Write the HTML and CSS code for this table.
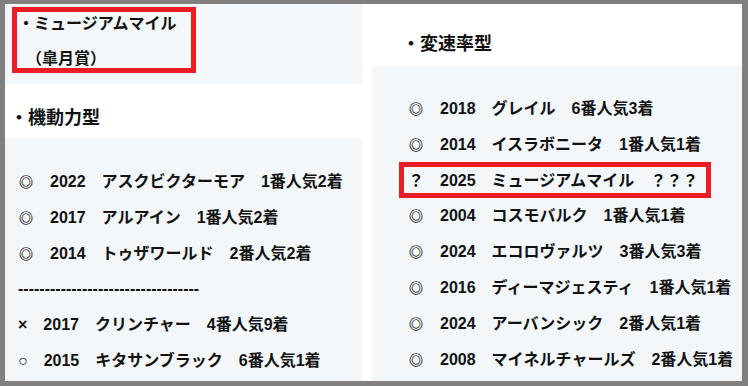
FILE: index.html
```html
<!DOCTYPE html>
<html lang="ja">
<head>
<meta charset="utf-8">
<title>ミュージアムマイル</title>
<link rel="stylesheet" href="styles.css">
</head>
<body>
<div class="frame">
  <div class="col col-left">
    <div class="panel intro">
      <p class="line">・ミュージアムマイル</p>
      <p class="line">　（皐月賞）</p>
      <span class="mark mark-intro"></span>
    </div>
    <h2 class="sec sec-left">・機動力型</h2>
    <div class="panel list list-left">
      <p class="row"><span class="sym">◎</span>　2022　アスクビクターモア　1番人気2着</p>
      <p class="row"><span class="sym">◎</span>　2017　アルアイン　1番人気2着</p>
      <p class="row"><span class="sym">◎</span>　2014　トゥザワールド　2番人気2着</p>
      <p class="row">----------------------------------</p>
      <p class="row">×　2017　クリンチャー　4番人気9着</p>
      <p class="row">○　2015　キタサンブラック　6番人気1着</p>
    </div>
  </div>
  <div class="col col-right">
    <h2 class="sec sec-right">・変速率型</h2>
    <div class="panel list list-right">
      <p class="row"><span class="sym">◎</span>　2018　グレイル　6番人気3着</p>
      <p class="row"><span class="sym">◎</span>　2014　イスラボニータ　1番人気1着</p>
      <p class="row row-marked">？　2025　ミュージアムマイル　？？？<span class="mark mark-row"></span></p>
      <p class="row"><span class="sym">◎</span>　2004　コスモバルク　1番人気1着</p>
      <p class="row"><span class="sym">◎</span>　2024　エコロヴァルツ　3番人気3着</p>
      <p class="row"><span class="sym">◎</span>　2016　ディーマジェスティ　1番人気1着</p>
      <p class="row"><span class="sym">◎</span>　2024　アーバンシック　2番人気1着</p>
      <p class="row"><span class="sym">◎</span>　2008　マイネルチャールズ　2番人気1着</p>
    </div>
  </div>
</div>
</body>
</html>
```

FILE: styles.css
```css
html, body {
  margin: 0;
  padding: 0;
  background: #808080;
}

body {
  font-family: "Liberation Sans", "Noto Sans CJK JP", sans-serif;
  font-weight: bold;
  color: #121212;
  padding: 4px 6px 5px 5px;
  height: 386px;
  box-sizing: border-box;
  overflow: hidden;
}

.frame {
  background: #ffffff;
  height: 377px;
  display: grid;
  grid-template-columns: 357px 370px;
  column-gap: 10px;
  overflow: hidden;
}

.col {
  display: flex;
  flex-direction: column;
  min-width: 0;
}

.panel {
  background: #f3f7fa;
}

p {
  margin: 0;
  white-space: nowrap;
}

.intro {
  position: relative;
  height: 80px;
  box-sizing: border-box;
  padding: 2px 0 0 13px;
  font-size: 16px;
  border-bottom-right-radius: 3px;
}

.intro .line {
  line-height: 35px;
}

.sec {
  margin: 0;
  font-size: 18px;
  line-height: 24px;
  font-weight: bold;
}

.sec-left {
  padding: 22px 0 8px 5px;
}

.sec-right {
  padding: 28px 0 10px 30px;
}

.list {
  flex: 1;
  font-size: 16px;
}

.list-left {
  padding: 26px 0 0 13px;
  border-top-right-radius: 3px;
}

.list-right {
  padding: 25px 0 0 36px;
}

.row {
  line-height: 35.8px;
}

.sym {
  display: inline-block;
  width: 16px;
  text-align: center;
  font-size: 14px;
  line-height: 16px;
  font-weight: bold;
  color: #121212;
  -webkit-text-stroke: 0.15px #121212;
}

.row-marked {
  position: relative;
}

.mark {
  position: absolute;
  border: 5px solid #ec1c24;
  box-sizing: border-box;
}

.mark-intro {
  left: 7px;
  top: 3px;
  width: 184px;
  height: 66px;
}

.mark-row {
  left: -9px;
  top: -1px;
  width: 312px;
  height: 36px;
}
```
